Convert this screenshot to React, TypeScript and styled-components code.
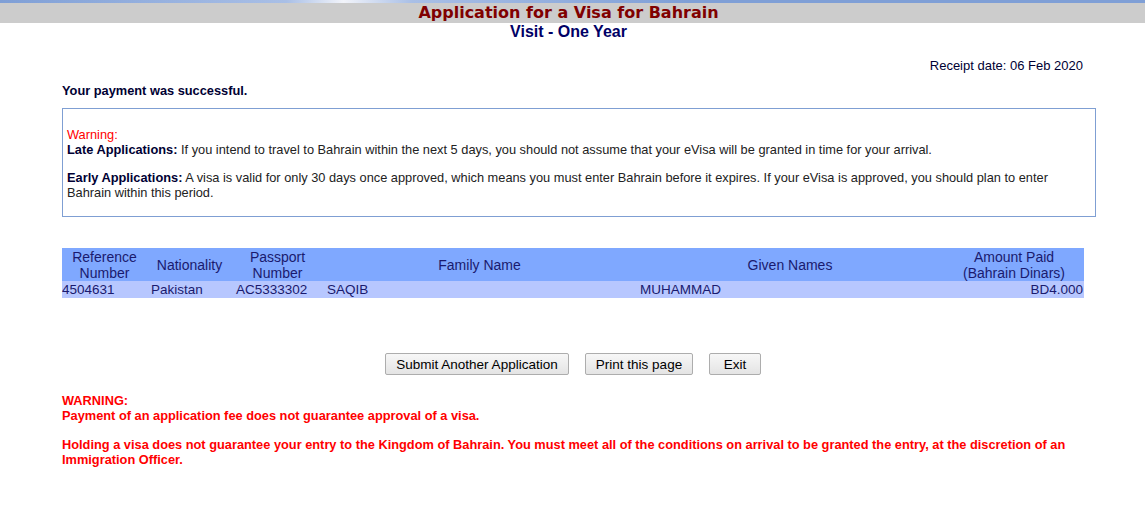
import React from "react";
import styled, { createGlobalStyle } from "styled-components";

const Global = createGlobalStyle`
  html, body { margin: 0; padding: 0; background: #fff; }
  body { font-family: "Liberation Sans", Arial, sans-serif; }
`;

const TopLine = styled.div`
  height: 3px;
  background: linear-gradient(90deg, #7f9fd6 0%, #a9bfe6 25%, #f2f4fa 30%, #a9bfe6 36%, #7f9fd6 60%, #7f9fd6 100%);
`;

const TitleBar = styled.div`
  height: 20px;
  background: #cccccc;
  display: flex;
  align-items: center;
  justify-content: center;
  padding-right: 8px;
`;

const Title = styled.h1`
  margin: 0;
  font-family: "DejaVu Sans", Verdana, sans-serif;
  font-size: 16px;
  font-weight: bold;
  color: #800000;
  line-height: 20px;
`;

const SubTitle = styled.h2`
  margin: 0;
  padding-right: 8px;
  text-align: center;
  font-family: "Liberation Sans", Arial, sans-serif;
  font-size: 16px;
  font-weight: bold;
  color: #000066;
  line-height: 18px;
`;

const Content = styled.div`
  width: 1022px;
  margin-left: 62px;
`;

const Receipt = styled.div`
  text-align: right;
  font-size: 13px;
  color: #000033;
  margin-top: 17px;
  line-height: 15px;
  padding-right: 1px;
`;

const Success = styled.div`
  font-size: 12.8px;
  font-weight: bold;
  color: #000033;
  margin-top: 10px;
  line-height: 15px;
`;

const NoticeBox = styled.div`
  width: 1034px;
  box-sizing: border-box;
  border: 1px solid #7f9fd3;
  margin-top: 10px;
  padding: 18px 5px 16px 4px;
  font-size: 12.8px;
  line-height: 15px;
  color: #222;
`;

const Red = styled.div`
  color: #ff0000;
`;

const Para = styled.p<{ $gap?: number }>`
  margin: ${(p) => p.$gap ?? 0}px 0 0 0;
`;

const Label = styled.b`
  color: #000033;
`;

const Table = styled.table`
  width: 1022px;
  table-layout: fixed;
  border-collapse: collapse;
  margin-top: 31px;
  font-size: 14px;
  color: #1a1a6e;
`;

const Col = styled.col<{ $w: number }>`
  width: ${(p) => p.$w}px;
`;

const HeadCell = styled.th`
  background: #7fa8ff;
  font-weight: normal;
  text-align: center;
  line-height: 16px;
  padding: 1px 1px 0 1px;
  vertical-align: middle;
  height: 32px;
`;

const Cell = styled.td<{ $align?: string; $first?: boolean }>`
  background: #b7c7ff;
  text-align: ${(p) => p.$align ?? "left"};
  font-size: 13.5px;
  line-height: 15px;
  padding: 1px 1px 1px ${(p) => (p.$first ? 0 : 4)}px;
  white-space: nowrap;
`;

const Buttons = styled.div`
  display: flex;
  justify-content: center;
  gap: 16px;
  margin-top: 55px;
`;

const Button = styled.button<{ $w: number }>`
  font-family: "Liberation Sans", Arial, sans-serif;
  font-size: 13.5px;
  color: #000;
  background: linear-gradient(#f7f7f7, #e4e4e4);
  border: 1px solid #adadad;
  border-radius: 2px;
  width: ${(p) => p.$w}px;
  height: 22px;
  padding: 0;
`;

const Warnings = styled.div`
  margin-top: 18px;
  font-size: 12.8px;
  line-height: 15px;
  font-weight: bold;
  color: #ff0000;
  width: 1022px;
`;

export default function App() {
  return (
    <>
      <Global />
      <TopLine />
      <TitleBar>
        <Title>Application for a Visa for Bahrain</Title>
      </TitleBar>
      <SubTitle>Visit - One Year</SubTitle>
      <Content>
        <Receipt>Receipt date: 06 Feb 2020</Receipt>
        <Success>Your payment was successful.</Success>
        <NoticeBox>
          <Red>Warning:</Red>
          <div>
            <Label>Late Applications:</Label> If you intend to travel to Bahrain within the next 5 days, you should not assume that your eVisa will be granted in time for your arrival.
          </div>
          <Para $gap={13}>
            <Label>Early Applications:</Label> A visa is valid for only 30 days once approved, which means you must enter Bahrain before it expires. If your eVisa is approved, you should plan to enter Bahrain within this period.
          </Para>
        </NoticeBox>
        <Table>
          <colgroup>
            <Col $w={85} />
            <Col $w={85} />
            <Col $w={91} />
            <Col $w={313} />
            <Col $w={308} />
            <Col $w={140} />
          </colgroup>
          <thead>
            <tr>
              <HeadCell>Reference<br />Number</HeadCell>
              <HeadCell>Nationality</HeadCell>
              <HeadCell>Passport<br />Number</HeadCell>
              <HeadCell>Family Name</HeadCell>
              <HeadCell>Given Names</HeadCell>
              <HeadCell>Amount Paid<br />(Bahrain Dinars)</HeadCell>
            </tr>
          </thead>
          <tbody>
            <tr>
              <Cell $first>4504631</Cell>
              <Cell>Pakistan</Cell>
              <Cell>AC5333302</Cell>
              <Cell>SAQIB</Cell>
              <Cell>MUHAMMAD</Cell>
              <Cell $align="right">BD4.000</Cell>
            </tr>
          </tbody>
        </Table>
        <Buttons>
          <Button $w={184}>Submit Another Application</Button>
          <Button $w={108}>Print this page</Button>
          <Button $w={52}>Exit</Button>
        </Buttons>
        <Warnings>
          <div>WARNING:</div>
          <div>Payment of an application fee does not guarantee approval of a visa.</div>
          <Para $gap={14}>
            Holding a visa does not guarantee your entry to the Kingdom of Bahrain. You must meet all of the conditions on arrival to be granted the entry, at the discretion of an Immigration Officer.
          </Para>
        </Warnings>
      </Content>
    </>
  );
}
